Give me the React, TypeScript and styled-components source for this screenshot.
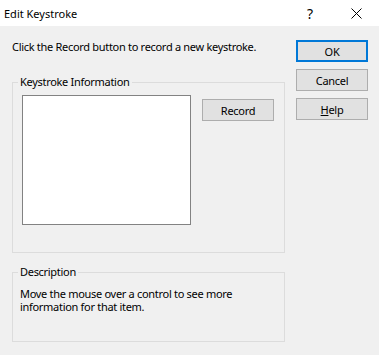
import styled, { createGlobalStyle } from 'styled-components';

const GlobalStyle = createGlobalStyle`
  html, body {
    margin: 0;
    padding: 0;
    background: #f0f0f0;
  }
  body {
    font-family: 'Noto Sans', 'Liberation Sans', sans-serif;
    font-size: 11px;
    letter-spacing: -0.3px;
    color: #000;
  }
`;

const Window = styled.div`
  width: 379px;
  height: 355px;
  display: flex;
  flex-direction: column;
  background: #f0f0f0;
  overflow: hidden;
`;

const TitleBar = styled.div`
  height: 26px;
  flex-shrink: 0;
  background: #fff;
  display: flex;
  align-items: stretch;
`;

const Title = styled.div`
  flex: 1;
  padding-left: 4px;
  display: flex;
  align-items: center;
  letter-spacing: 0;
`;

const CaptionButton = styled.div`
  width: 46px;
  display: flex;
  align-items: center;
  justify-content: center;
  font-size: 14px;
`;

const Body = styled.div`
  flex: 1;
  display: flex;
  gap: 11px;
  padding: 13px 11px 0 12px;
`;

const LeftColumn = styled.div`
  width: 273px;
  display: flex;
  flex-direction: column;
`;

const Instruction = styled.div`
  line-height: 16px;
  height: 16px;
  white-space: nowrap;
`;

const Group = styled.fieldset<{ $height: number; $top: number }>`
  box-sizing: border-box;
  margin: ${(p) => p.$top}px 0 0 0;
  padding: 0;
  height: ${(p) => p.$height}px;
  border: 1px solid #dcdcdc;
  min-width: 0;
`;

const Legend = styled.legend`
  margin-left: 5px;
  padding: 0 2px;
  line-height: 16px;
`;

const GroupRow = styled.div`
  display: flex;
  align-items: flex-start;
  gap: 11px;
  margin: 5px 0 0 9px;
`;

const ListBox = styled.div`
  box-sizing: border-box;
  width: 169px;
  height: 130px;
  background: #fff;
  border: 1px solid #828282;
`;

const Button = styled.button<{ $default?: boolean }>`
  box-sizing: border-box;
  width: 72px;
  height: 22px;
  margin: 0;
  padding: 0;
  font-family: inherit;
  font-size: 11px;
  letter-spacing: inherit;
  color: #000;
  background: #e1e1e1;
  border: ${(p) => (p.$default ? '2px solid #0078d7' : '1px solid #adadad')};
  border-radius: 0;
`;

const RecordButton = styled(Button)`
  margin-top: 4px;
`;

const DescriptionText = styled.div`
  margin: 7px 0 0 7px;
  line-height: 13px;
  width: 240px;
`;

const ButtonColumn = styled.div`
  width: 72px;
  display: flex;
  flex-direction: column;
  gap: 7px;
  margin-top: 1px;
`;

const CloseIcon = () => (
  <svg width="11" height="11" viewBox="0 0 11 11">
    <path d="M0.5 0.5 L10.5 10.5 M10.5 0.5 L0.5 10.5" stroke="#000" strokeWidth="1" fill="none" />
  </svg>
);

export default function App() {
  return (
    <Window>
      <GlobalStyle />
      <TitleBar>
        <Title>Edit Keystroke</Title>
        <CaptionButton>?</CaptionButton>
        <CaptionButton>
          <CloseIcon />
        </CaptionButton>
      </TitleBar>
      <Body>
        <LeftColumn>
          <Instruction>Click the Record button to record a new keystroke.</Instruction>
          <Group $top={19} $height={179}>
            <Legend>Keystroke Information</Legend>
            <GroupRow>
              <ListBox />
              <RecordButton>Record</RecordButton>
            </GroupRow>
          </Group>
          <Group $top={11} $height={78}>
            <Legend>Description</Legend>
            <DescriptionText>
              Move the mouse over a control to see more information for that item.
            </DescriptionText>
          </Group>
        </LeftColumn>
        <ButtonColumn>
          <Button $default>OK</Button>
          <Button>Cancel</Button>
          <Button>
            <u>H</u>elp
          </Button>
        </ButtonColumn>
      </Body>
    </Window>
  );
}
